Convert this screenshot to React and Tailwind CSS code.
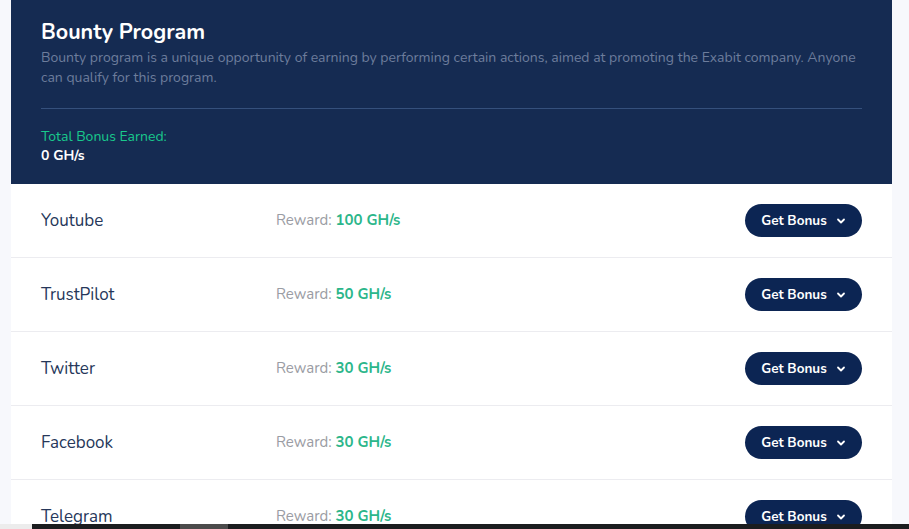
import React from 'react'

const bounties = [
    { name: 'Youtube', reward: '100 GH/s' },
    { name: 'TrustPilot', reward: '50 GH/s' },
    { name: 'Twitter', reward: '30 GH/s' },
    { name: 'Facebook', reward: '30 GH/s' },
    { name: 'Telegram', reward: '30 GH/s' },
];

const Chevron = () => (
    <svg width="10" height="10" viewBox="0 0 10 10" fill="none">
        <path d="M2 3.5 L5 6.5 L8 3.5" stroke="currentColor" strokeWidth="1.8" strokeLinecap="round" strokeLinejoin="round" />
    </svg>
)

const BountyRow = ({ name, reward }) => (
    <div className="flex items-center h-[74px] px-[30px] border-b border-[#ececf0]">
        <div className="w-[235px] text-[17px] text-[#26375a]">{name}</div>
        <div className="flex-1 text-[15px] text-[#9a9ca3]">
            Reward: <span className="font-bold text-[#2bb68a]">{reward}</span>
        </div>
        <button className="flex items-center gap-[9px] h-[33px] w-[117px] pt-px justify-center rounded-full bg-[#0c2553] text-white text-[13.5px] font-bold">
            Get Bonus
            <Chevron />
        </button>
    </div>
)

export default function App() {
    return (
        <div className="h-[529px] overflow-hidden bg-[#f7f8fc] font-['Nunito','Lato','Noto_Sans',sans-serif] relative">
            <div className="ml-[11px] w-[881px] bg-white">
                <div className="bg-[#152b52] px-[30px] pt-[18px] pb-[19px]">
                    <h1 className="text-[21.5px] font-bold text-white leading-[28px]">Bounty Program</h1>
                    <p className="mt-[2px] text-[14px] leading-[20px] text-[#6d7d9c]">
                        Bounty program is a unique opportunity of earning by performing certain actions, aimed at promoting the Exabit company. Anyone can qualify for this program.
                    </p>
                    <div className="mt-[20px] border-t border-[#35507c]" />
                    <div className="mt-[18px] text-[14px] leading-[19px] text-[#19c98c]">Total Bonus Earned:</div>
                    <div className="text-[14px] leading-[19px] font-bold text-white">0 GH/s</div>
                </div>
                {bounties.map((b) => (
                    <BountyRow key={b.name} {...b} />
                ))}
            </div>
            <div className="absolute left-0 right-0 bottom-0 h-[5px] flex">
                <div className="w-[32px] bg-[#ececec]" />
                <div className="w-[148px] bg-[#1b1d1f]" />
                <div className="w-[48px] bg-[#4b4b4b]" />
                <div className="flex-1 bg-[#1b1d1f]" />
            </div>
        </div>
    )
}
